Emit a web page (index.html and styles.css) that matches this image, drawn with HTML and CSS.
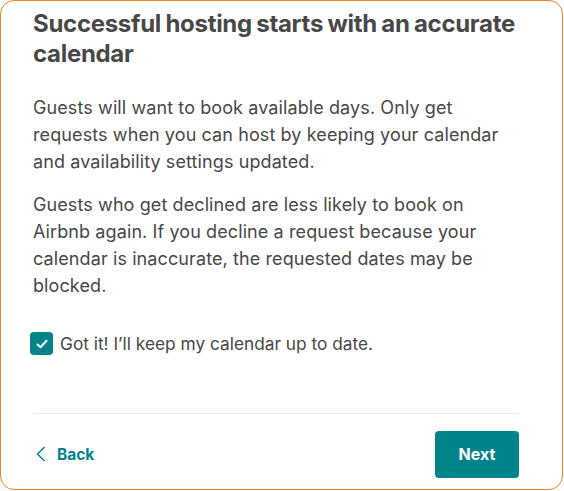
FILE: index.html
```html
<!DOCTYPE html>
<html>
<head>
<meta charset="utf-8">
<link rel="stylesheet" href="styles.css">
</head>
<body>
<div class="frame">
  <h1 class="title">Successful hosting starts with an accurate calendar</h1>
  <p class="para">Guests will want to book available days. Only get requests when you can host by keeping your calendar and availability settings updated.</p>
  <p class="para">Guests who get declined are less likely to book on Airbnb again. If you decline a request because your calendar is inaccurate, the requested dates may be blocked.</p>
  <label class="check">
    <span class="box"><svg width="14" height="14" viewBox="0 0 14 14"><path d="M2.5 7.5 L5.5 10.2 L11.5 3.8" fill="none" stroke="#fff" stroke-width="2" stroke-linecap="round" stroke-linejoin="round"/></svg></span>
    <span class="check-text">Got it! I’ll keep my calendar up to date.</span>
  </label>
  <div class="divider"></div>
  <div class="footer">
    <a class="back"><svg width="10" height="16" viewBox="0 0 10 16"><path d="M8.5 1 L1.5 8 L8.5 15" fill="none" stroke="#008489" stroke-width="1.5"/></svg><span>Back</span></a>
    <button class="next">Next</button>
  </div>
</div>
</body>
</html>
```
FILE: styles.css
```css
html, body { margin: 0; padding: 0; background: #fff; }
body { width: 564px; height: 491px; overflow: hidden; }
.frame {
  box-sizing: border-box;
  width: 563px;
  height: 490px;
  border: 1px solid #f5822a;
  border-radius: 14px;
  padding: 8px 43px 0 32px;
  font-family: Inter, "Open Sans", sans-serif;
  color: #484848;
}
.title {
  margin: 0;
  font-size: 24px;
  line-height: 30px;
  font-weight: 700;
  letter-spacing: -0.3px;
  word-spacing: -1px;
}
.para {
  margin: 0;
  font-size: 18px;
  line-height: 26.8px;
  font-weight: 400;
  letter-spacing: 0.1px;
}
.title + .para { margin-top: 26px; }
.para + .para { margin-top: 17px; }
.check {
  display: flex;
  align-items: center;
  gap: 7px;
  margin-top: 31px;
  margin-left: -3px;
}
.box {
  width: 23px; height: 23px;
  background: #008489;
  border-radius: 4px;
  display: flex; align-items: center; justify-content: center;
}
.check-text { font-size: 17.3px; line-height: 26px; }
.divider {
  height: 1px;
  background: #ebebeb;
  margin-top: 56px;
}
.footer {
  display: flex;
  justify-content: space-between;
  align-items: center;
  margin-top: 17px;
}
.back {
  display: flex; align-items: center; gap: 11px;
  color: #008489; font-weight: 700; font-size: 15.5px;
  padding-left: 3px;
}
.next {
  width: 84px; height: 47px;
  background: #008489; color: #fff;
  border: none; border-radius: 4px;
  font-family: inherit; font-weight: 700; font-size: 16px;
}
```
